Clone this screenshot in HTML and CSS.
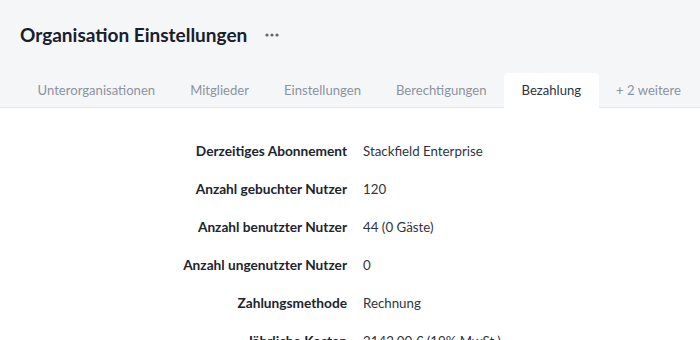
FILE: index.html
```html
<!DOCTYPE html>
<html lang="de">
<head>
<meta charset="utf-8">
<title>Organisation Einstellungen</title>
<link rel="stylesheet" href="styles.css">
</head>
<body>
<header class="header">
  <div class="title-row">
    <h1 class="title">Organisation Einstellungen</h1>
    <button class="more" aria-label="Mehr">
      <svg width="14" height="4" viewBox="0 0 14 4"><circle cx="2" cy="2" r="1.6"/><circle cx="7" cy="2" r="1.6"/><circle cx="12" cy="2" r="1.6"/></svg>
    </button>
  </div>
  <nav class="tabs">
    <a class="tab">Unterorganisationen</a>
    <a class="tab">Mitglieder</a>
    <a class="tab">Einstellungen</a>
    <a class="tab">Berechtigungen</a>
    <a class="tab active">Bezahlung</a>
    <a class="tab">+ 2 weitere</a>
  </nav>
</header>
<main class="content">
  <dl class="details">
    <div class="row"><dt>Derzeitiges Abonnement</dt><dd>Stackfield Enterprise</dd></div>
    <div class="row"><dt>Anzahl gebuchter Nutzer</dt><dd>120</dd></div>
    <div class="row"><dt>Anzahl benutzter Nutzer</dt><dd>44 (0 Gäste)</dd></div>
    <div class="row"><dt>Anzahl ungenutzter Nutzer</dt><dd>0</dd></div>
    <div class="row"><dt>Zahlungsmethode</dt><dd>Rechnung</dd></div>
    <div class="row"><dt>Jährliche Kosten</dt><dd>2142,00 € (19% MwSt.)</dd></div>
  </dl>
</main>
</body>
</html>
```
FILE: styles.css
```css
* { box-sizing: border-box; }
html, body { margin: 0; padding: 0; }
body {
  font-family: "Lato", "Noto Sans", sans-serif;
  background: #ffffff;
  color: #1c2430;
  width: 700px;
  height: 340px;
  overflow: hidden;
}
.header {
  background: #f5f6f8;
  border-bottom: 1px solid #e3e5e9;
}
.title-row {
  display: flex;
  align-items: center;
  height: 73px;
  padding: 0 20px 4px;
  gap: 18px;
}
.title {
  margin: 0;
  font-size: 19px;
  font-weight: 700;
  color: #16202d;
}
.more {
  border: 0;
  background: none;
  padding: 0;
  display: flex;
  fill: #5f6773;
}
.tabs {
  display: flex;
  padding: 0 20px;
}
.tab {
  display: block;
  flex-shrink: 0;
  white-space: nowrap;
  height: 34px;
  line-height: 35px;
  padding: 0 17.5px;
  font-size: 13.1px;
  color: #8b93a0;
  border-radius: 4px 4px 0 0;
}
.tab.active {
  background: #ffffff;
  color: #2c3440;
  margin-bottom: -1px;
  height: 35px;
}
.content {
  padding-top: 24px;
}
.details {
  margin: 0;
  display: grid;
  grid-template-columns: 347px 1fr;
}
.row {
  display: contents;
}
.row dt {
  text-align: right;
  font-weight: 700;
  font-size: 13.7px;
  color: #1c2430;
  height: 38px;
  line-height: 38px;
  white-space: nowrap;
}
.row dd {
  margin: 0;
  padding-left: 16px;
  font-size: 13.3px;
  color: #2e3540;
  height: 38px;
  line-height: 38px;
  white-space: nowrap;
}
```
